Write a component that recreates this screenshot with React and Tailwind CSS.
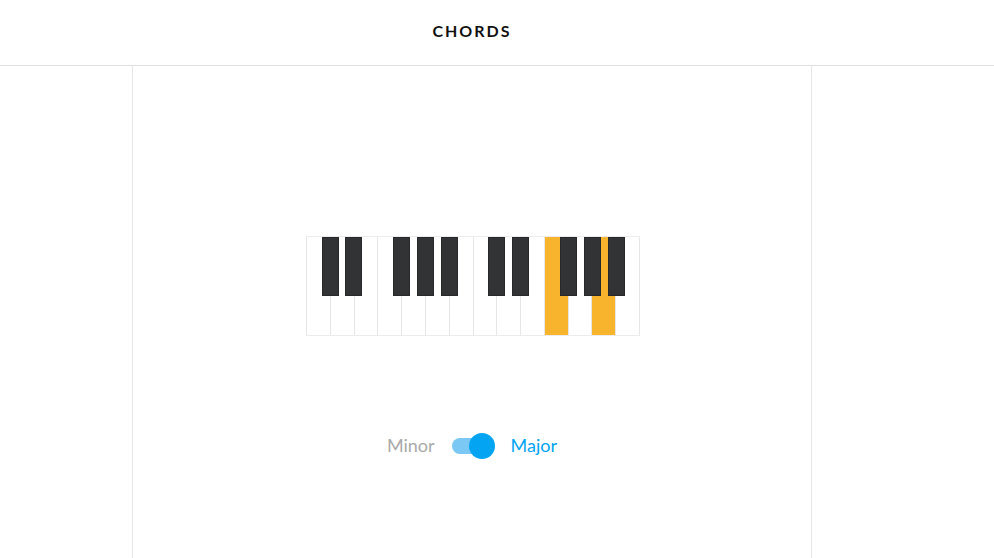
import { useState } from 'react';

const whiteKeys = ['C', 'D', 'E', 'F', 'G', 'A', 'B', 'C', 'D', 'E', 'F', 'G', 'A', 'B'];
const blackKeys = [16, 39, 87, 111, 135, 182, 206, 254, 278, 302];
const activeWhite = [10, 12];

const Keyboard = () => (
  <div className="relative w-[334px] h-[100px] ml-[2px] border-t border-[#ececec] border-b">
    <div className="grid grid-cols-14 h-full border-l border-[#e6e6e6]">
      {whiteKeys.map((k, i) => (
        <div
          key={i}
          className={`h-full border-r border-[#e6e6e6] ${activeWhite.includes(i) ? 'bg-[#f7b42c]' : 'bg-white'}`}
        />
      ))}
    </div>
    {blackKeys.map((left) => (
      <div
        key={left}
        className="absolute top-0 w-[17px] h-[59px] bg-[#313335] border border-[#262829]"
        style={{ left }}
      />
    ))}
  </div>
);

const Toggle = () => {
  const [major, setMajor] = useState(true);
  return (
    <div className="flex items-center gap-[17px] font-['Lato','Noto_Sans',sans-serif] text-[18px]">
      <span className={major ? 'text-[#a9a9a9]' : 'text-[#03a4f2]'}>Minor</span>
      <button
        onClick={() => setMajor(!major)}
        className="relative w-[42px] h-[26px] flex items-center"
      >
        <span className="block w-[34px] h-[16px] rounded-full bg-[#7cc8f5]" />
        <span
          className={`absolute top-0 w-[26px] h-[26px] rounded-full bg-[#03a4f2] ${major ? 'left-[17px]' : 'left-0'}`}
        />
      </button>
      <span className={major ? 'text-[#03a4f2]' : 'text-[#a9a9a9]'}>Major</span>
    </div>
  );
};

export default function App() {
  return (
    <div className="min-h-[558px] bg-white font-['Lato','Noto_Sans',sans-serif]">
      {/* Header */}
      <header className="h-[66px] border-b border-[#e0e0e0] flex items-center">
        <div className="ml-[132px] w-[680px] flex justify-center">
          <h1 className="text-[16px] font-bold tracking-[2px] text-[#111] mb-[4px]">CHORDS</h1>
        </div>
      </header>

      {/* Panel */}
      <main className="ml-[132px] w-[680px] h-[492px] border-x border-[#e6e6e6] flex flex-col items-center pt-[170px]">
        <Keyboard />
        <div className="mt-[96px]">
          <Toggle />
        </div>
      </main>
    </div>
  );
}
